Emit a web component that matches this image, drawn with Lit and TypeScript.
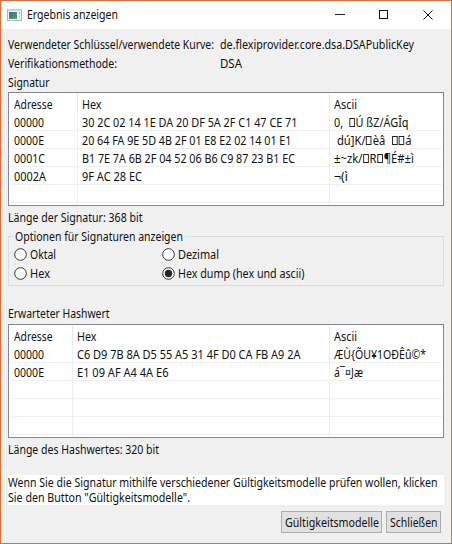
import { LitElement, html, css, svg } from "lit";
import { customElement, property } from "lit/decorators.js";

const BOX = "\u25a1";

/** A single line of text condensed or widened to fill a given width. */
@customElement("fit-text")
class FitText extends LitElement {
  @property() text = "";
  @property({ type: Number }) w = 0;

  static styles = css`
    :host { display: block; white-space: pre; }
    .t { display: inline-block; white-space: pre; transform-origin: 0 50%; }
    .box { display: inline-block; box-sizing: border-box; width: 6px; height: 9px; border: 1px solid #222; margin: 0 1px 0 0.5px; font-size: 0; vertical-align: baseline; }
  `;

  updated() {
    const t = this.renderRoot.querySelector(".t") as HTMLElement;
    const natural = t.offsetWidth;
    if (!this.w || !natural) return;
    t.style.transform = `scaleX(${this.w / t.getBoundingClientRect().width})`;
    this.style.width = this.w + "px";
  }

  render() {
    const parts = this.text.split(BOX);
    return html`<span class="t">${parts.map((p, i) => html`${i ? html`<span class="box"></span>` : ""}${p}`)}</span>`;
  }
}

const fit = (text: string, w: number) => html`<fit-text .text=${text} .w=${w}></fit-text>`;

type Cell = [string, number];

/** Report-style list with a header row and grid lines. */
@customElement("dump-table")
class DumpTable extends LitElement {
  @property({ attribute: false }) rows: Cell[][] = [];
  @property({ type: Number }) first = 68;

  static styles = css`
    :host { display: block; box-sizing: border-box; height: 114px; border: 1px solid #828790; background: #fff; padding: 1px 1px 0 1px; }
    .row { display: grid; height: 18px; box-sizing: border-box; border-bottom: 1px solid #f1f1f1; line-height: 19px; }
    .head { height: 19px; border-bottom: 0; line-height: 22px; }
    .cell { box-sizing: border-box; height: 100%; padding-left: 4.3px; border-left: 1px solid #eaeef8; min-width: 0; }
    .cell:first-child { border-left: 0; }
    .head .cell { border-left-color: #e5e5e5; }
  `;

  render() {
    const cols = `grid-template-columns:${this.first}px ${319 - this.first}px 1fr`;
    const blank = Array.from({ length: 5 - this.rows.length }, () => [["", 0], ["", 0], ["", 0]] as Cell[]);
    const head: Cell[] = [["Adresse", 38.5], ["Hex", 19.5], ["Ascii", 23]];
    return [head, ...this.rows, ...blank].map(
      (r, i) => html`<div class="row ${i ? "" : "head"}" style=${cols}>
        ${r.map(([t, w]) => html`<div class="cell">${fit(t, w)}</div>`)}
      </div>`
    );
  }
}

@customElement("app-root")
class AppRoot extends LitElement {
  static styles = css`
    :host { display: block; width: 452px; height: 544px; font: 12px "Noto Sans", "Open Sans", sans-serif; color: #111; }
    .window { box-sizing: border-box; height: 544px; border: 1px solid #d9713f; background: #f0f0f0; display: flex; flex-direction: column; overflow: hidden; }
    .bar { flex: none; height: 28px; background: #fff; display: flex; align-items: center; padding: 0 18px 0 6px; margin-bottom: 7px; }
    .bar svg { display: block; }
    .title { margin-left: 5px; flex: 1; line-height: 26px; }
    .controls { display: flex; gap: 34px; }
    .body { padding: 0 7px; display: flex; flex-direction: column; }
    .info { display: grid; grid-template-columns: 212px 1fr; height: 19px; line-height: 17px; }
    .label { height: 18px; line-height: 17px; }
    .len { height: 23px; line-height: 24px; }
    .group { display: grid; grid-template-columns: 148px 1fr; grid-auto-rows: 19px; box-sizing: border-box; height: 50px; border: 1px solid #dcdcdc; padding: 8px 0 0 5px; margin-top: 7px; position: relative; }
    .legend { position: absolute; left: 4px; top: -10px; padding: 0 2px; background: #f0f0f0; line-height: 19px; }
    .radio { display: flex; align-items: center; gap: 2.5px; line-height: 19px; }
    .radio svg { display: block; }
    .hash { margin-top: 18px; height: 20px; line-height: 20px; }
    .note { background: #fff; height: 30px; line-height: 15px; margin-top: 14px; }
    .buttons { display: flex; justify-content: flex-end; gap: 4px; margin-top: 6px; padding-right: 3px; }
    .btn { box-sizing: border-box; width: 101px; height: 22px; border: 1px solid #adadad; background: #e1e1e1; padding-left: 3px; line-height: 21px; }
    .close { width: 55px; }
  `;

  radio(text: string, w: number, on = false) {
    return html`<div class="radio">
      <svg width="13" height="13" viewBox="0 0 13 13">
        <circle cx="6.5" cy="6.5" r="5.8" fill="#fff" stroke="#333" stroke-width="1"></circle>
        ${on ? svg`<circle cx="6.5" cy="6.5" r="3.7" fill="#262626"></circle>` : ""}
      </svg>
      ${fit(text, w)}
    </div>`;
  }

  render() {
    const signature: Cell[][] = [
      [["00000", 30], ["30 2C 02 14 1E DA 20 DF 5A 2F C1 47 CE 71", 215.5], ["0,  \u25a1Ú ßZ/ÁGÎq", 74.5]],
      [["0000E", 30], ["20 64 FA 9E 5D 4B 2F 01 E8 E2 02 14 01 E1", 209.5], [" dú]K/\u25a1èâ  \u25a1\u25a1á", 77.5]],
      [["0001C", 31], ["B1 7E 7A 6B 2F 04 52 06 B6 C9 87 23 B1 EC", 213], ["±~zk/\u25a1R\u25a1¶É#±ì", 80]],
      [["0002A", 32], ["9F AC 28 EC", 60], ["¬(ì", 14]],
    ];
    const hash: Cell[][] = [
      [["00000", 30], ["C6 D9 7B 8A D5 55 A5 31 4F D0 CA FB A9 2A", 223.5], ["ÆÙ{ÕU¥1OÐÊû©*", 92]],
      [["0000E", 30], ["E1 09 AF A4 4A E6", 91.5], ["á¯¤Jæ", 29]],
    ];
    return html`<div class="window">
      <div class="bar">
        <svg width="15" height="12" viewBox="0 0 15 12">
          <defs><linearGradient id="g" x1="0" y1="0" x2="1" y2="1"><stop offset="0" stop-color="#3d668f"></stop><stop offset="1" stop-color="#4ba56d"></stop></linearGradient></defs>
          <rect x=".5" y=".5" width="14" height="11" fill="#f4f5f6" stroke="#b0b5bb"></rect>
          <rect x="1" y="0" width="13" height="2" fill="#ccd1d6"></rect>
          <rect x="2" y="3" width="8" height="7" fill="url(#g)"></rect>
          <rect x="12" y="3" width="1" height="2" fill="#72b58b"></rect>
          <rect x="12" y="6" width="1" height="4" fill="#d4d8dc"></rect>
        </svg>
        <div class="title">${fit("Ergebnis anzeigen", 91)}</div>
        <div class="controls">
          <svg width="10" height="10" viewBox="0 0 10 10"><path d="M0 4.5H10" stroke="#222" fill="none"></path></svg>
          <svg width="10" height="10" viewBox="0 0 10 10"><rect x=".5" y=".5" width="8" height="8" stroke="#111" fill="none"></rect></svg>
          <svg width="10" height="10" viewBox="0 0 10 10"><path d="M.5 .5L9.5 9.5M9.5 .5L.5 9.5" stroke="#111" fill="none"></path></svg>
        </div>
      </div>
      <div class="body">
        <div class="info">${fit("Verwendeter Schlüssel/verwendete Kurve:", 206)}${fit("de.flexiprovider.core.dsa.DSAPublicKey", 194)}</div>
        <div class="info">${fit("Verifikationsmethode:", 109)}${fit("DSA", 22)}</div>
        <div class="label">${fit("Signatur", 41.5)}</div>
        <dump-table .rows=${signature} .first=${67}></dump-table>
        <div class="len">${fit("Länge der Signatur: 368 bit", 134.5)}</div>
        <div class="group">
          <div class="legend">${fit("Optionen für Signaturen anzeigen", 168)}</div>
          ${this.radio("Oktal", 26)}${this.radio("Dezimal", 41)}
          ${this.radio("Hex", 20)}${this.radio("Hex dump (hex und ascii)", 126.5, true)}
        </div>
        <div class="hash">${fit("Erwarteter Hashwert", 101.5)}</div>
        <dump-table .rows=${hash} .first=${62}></dump-table>
        <div class="len">${fit("Länge des Hashwertes: 320 bit", 151)}</div>
        <div class="note">
          ${fit("Wenn Sie die Signatur mithilfe verschiedener Gültigkeitsmodelle prüfen wollen, klicken", 429.5)}
          ${fit('Sie den Button "Gültigkeitsmodelle".', 182)}
        </div>
        <div class="buttons">
          <div class="btn">${fit("Gültigkeitsmodelle", 94)}</div>
          <div class="btn close">${fit("Schließen", 47.5)}</div>
        </div>
      </div>
    </div>`;
  }
}
